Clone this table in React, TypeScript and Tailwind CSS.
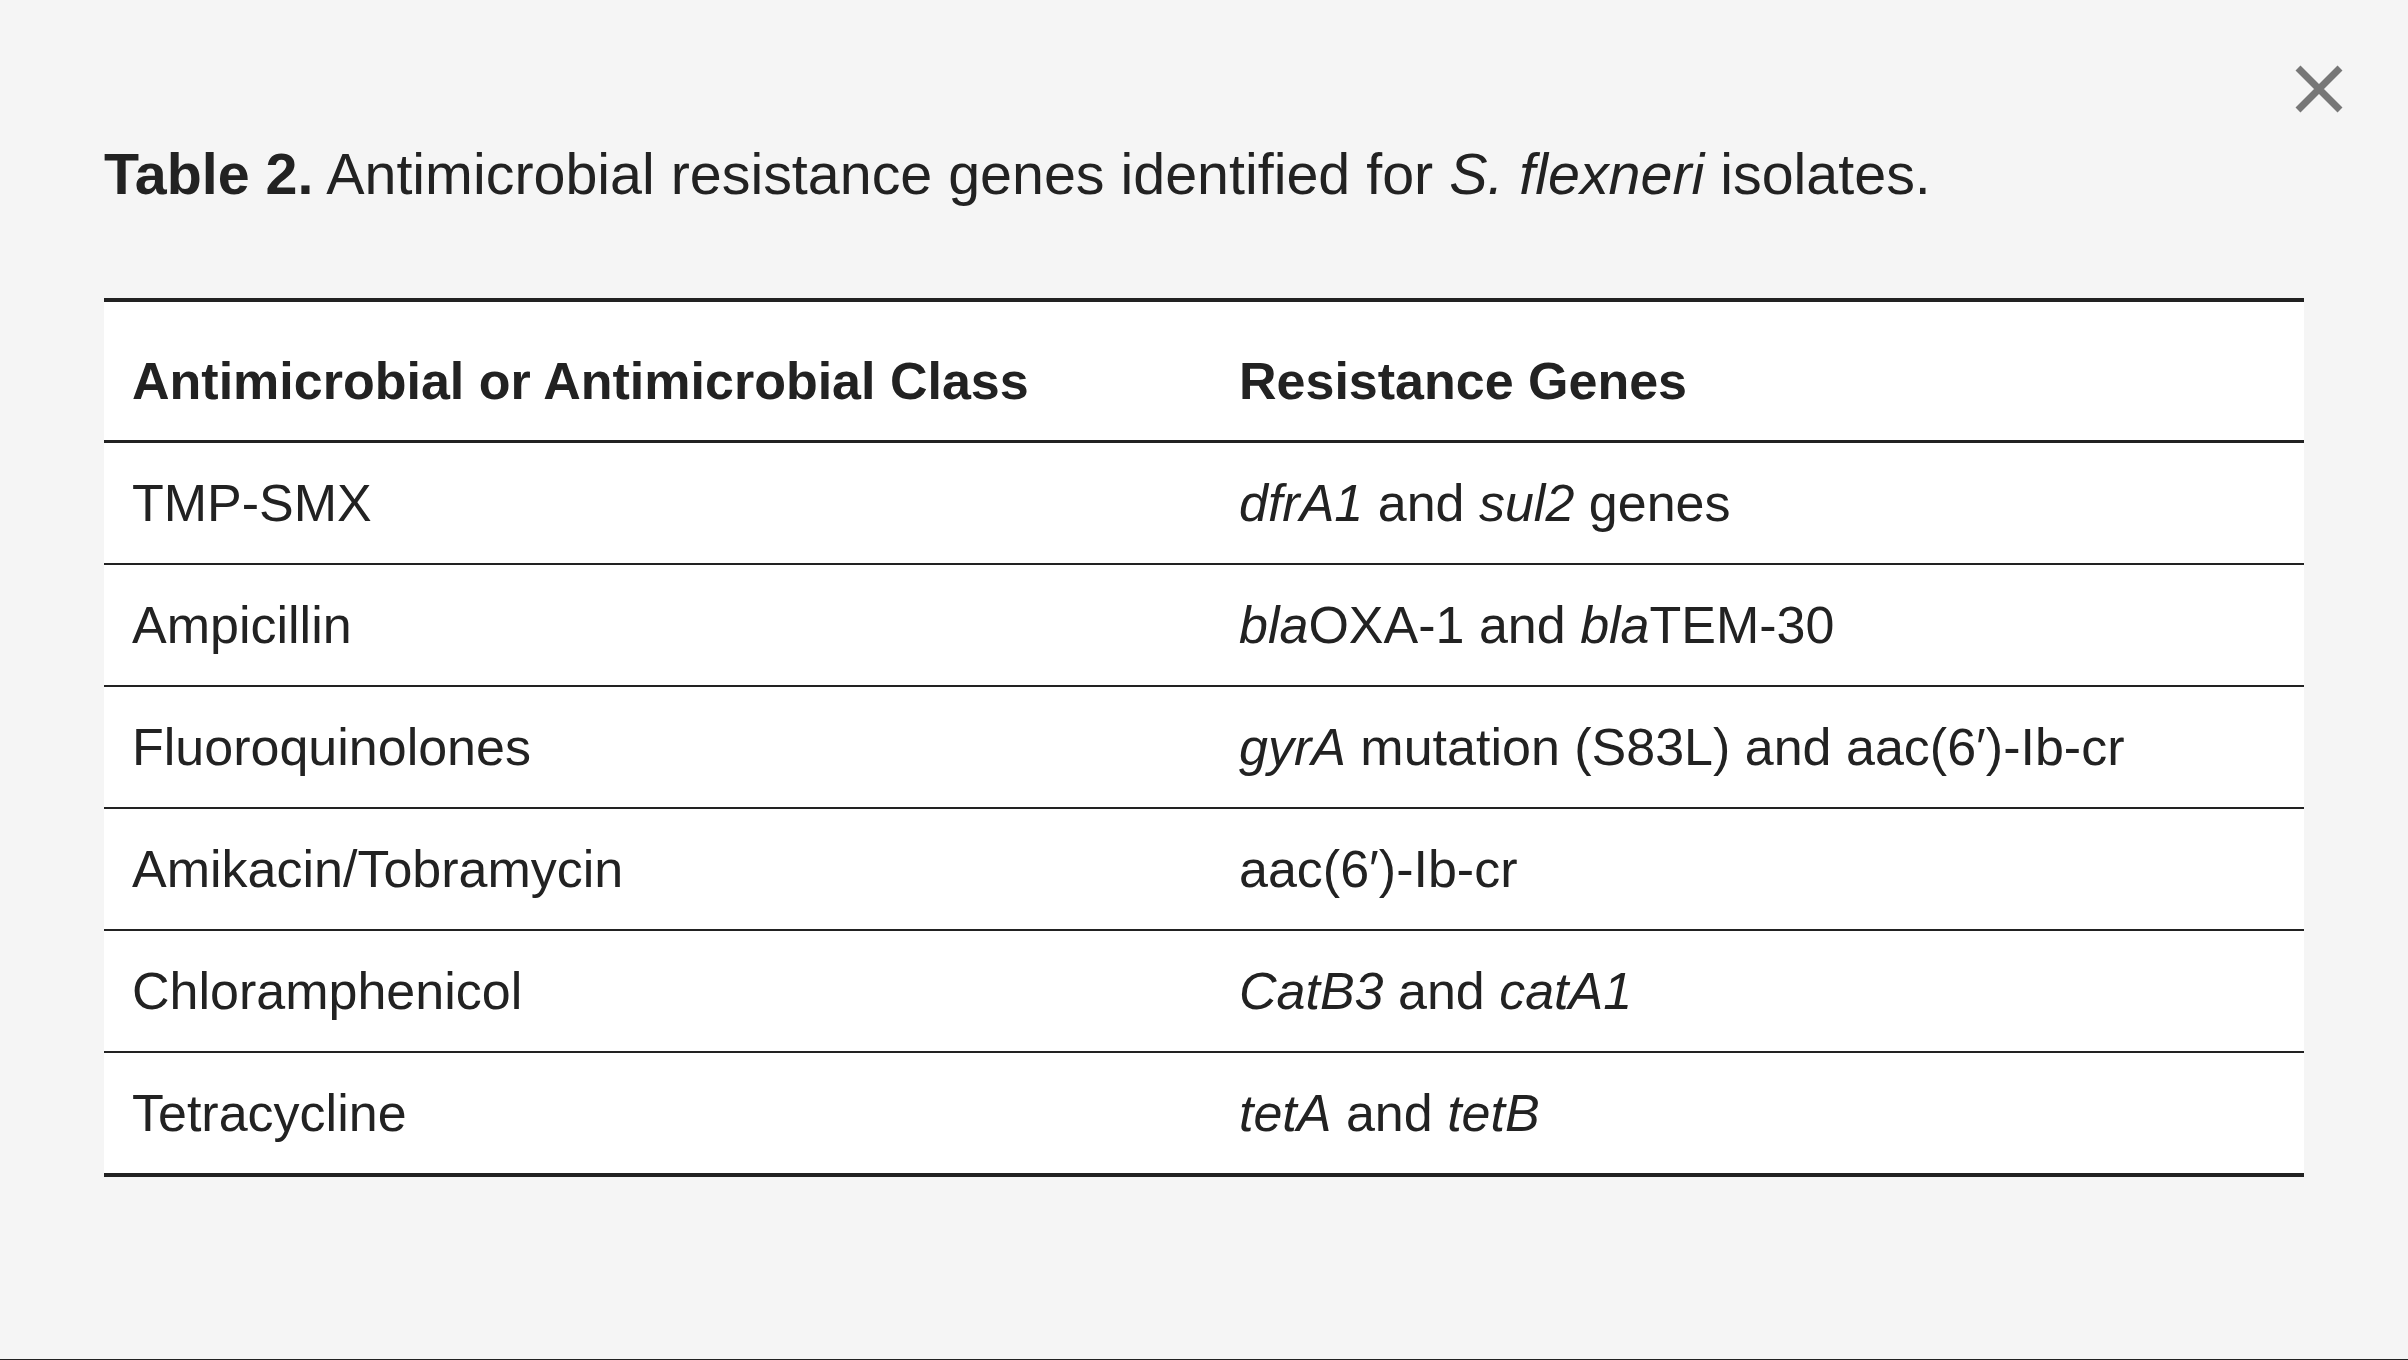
type Row = { drug: string; genes: React.ReactNode };

const rows: Row[] = [
  {
    drug: "TMP-SMX",
    genes: (
      <>
        <i>dfrA1</i> and <i>sul2</i> genes
      </>
    ),
  },
  {
    drug: "Ampicillin",
    genes: (
      <>
        <i>bla</i>OXA-1 and <i>bla</i>TEM-30
      </>
    ),
  },
  {
    drug: "Fluoroquinolones",
    genes: (
      <>
        <i>gyrA</i> mutation (S83L) and aac(6′)-Ib-cr
      </>
    ),
  },
  { drug: "Amikacin/Tobramycin", genes: <>aac(6′)-Ib-cr</> },
  {
    drug: "Chloramphenicol",
    genes: (
      <>
        <i>CatB3</i> and <i>catA1</i>
      </>
    ),
  },
  {
    drug: "Tetracycline",
    genes: (
      <>
        <i>tetA</i> and <i>tetB</i>
      </>
    ),
  },
];

const App = () => {
  return (
    <div className="relative h-[1360px] w-full bg-[#f5f5f5] border-b border-[#222] text-[#222] font-['Liberation_Sans',Arial,sans-serif]">
      {/* close button */}
      <button className="absolute right-[64px] top-[64px] p-0">
        <svg width="50" height="50" viewBox="0 0 50 50" className="block">
          <path d="M4 4 L46 46 M46 4 L4 46" stroke="#777" strokeWidth="7" strokeLinecap="butt" fill="none" />
        </svg>
      </button>

      <div className="pl-[104px] pr-[104px] pt-[142px]">
        <h2 className="text-[57.4px] leading-[65px]">
          <span className="font-bold">Table 2.</span> Antimicrobial resistance genes identified for{" "}
          <i>S. flexneri</i> isolates.
        </h2>

        <div className="mt-[91px] bg-white border-t-4 border-b-4 border-[#222] text-[52px] leading-[60px]">
          <div className="grid grid-cols-[1135px_1fr] border-b-[3px] border-[#222] font-bold">
            <div className="pl-[28px] pt-[49px] pb-[29px]">Antimicrobial or Antimicrobial Class</div>
            <div className="pt-[49px] pb-[29px]">Resistance Genes</div>
          </div>
          {rows.map((r, i) => (
            <div
              key={r.drug}
              className={
                i < rows.length - 1
                  ? "grid grid-cols-[1135px_1fr] items-center h-[122px] border-b-2 border-[#222]"
                  : "grid grid-cols-[1135px_1fr] items-center h-[120px]"
              }
            >
              <div className="pl-[28px]">{r.drug}</div>
              <div>{r.genes}</div>
            </div>
          ))}
        </div>
      </div>
    </div>
  );
};

export default App;
